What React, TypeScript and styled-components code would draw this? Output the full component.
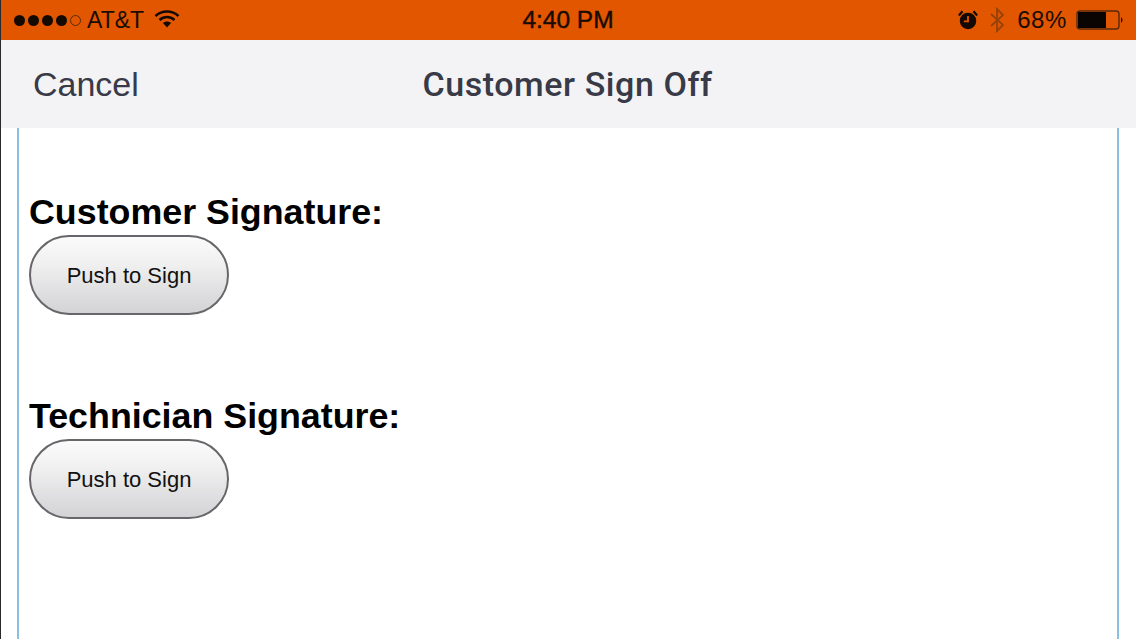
import React from "react";
import styled, { createGlobalStyle } from "styled-components";

const Global = createGlobalStyle`
  html, body { margin: 0; padding: 0; background: #fff; }
  body { font-family: "Liberation Sans", Arial, sans-serif; overflow: hidden; }
`;

const Screen = styled.div`
  width: 1136px;
  height: 639px;
  display: flex;
  flex-direction: column;
  overflow: hidden;
  border-left: 1px solid #2a2a2a;
  box-sizing: border-box;
`;

const StatusBar = styled.header`
  height: 40px;
  flex: none;
  background: #e25600;
  color: #1a0c02;
  display: grid;
  grid-template-columns: 1fr auto 1fr;
  align-items: center;
  font-size: 24px;
  padding: 0 12px 0 13px;
`;

const StatusLeft = styled.div`
  display: flex;
  align-items: center;
`;

const StatusRight = styled.div`
  display: flex;
  align-items: center;
  justify-content: flex-end;
`;

const Dots = styled.div`
  display: flex;
  align-items: center;
  gap: 3px;
  margin-right: 6px;
`;

const Dot = styled.span<{ $empty?: boolean }>`
  width: 11px;
  height: 11px;
  border-radius: 50%;
  box-sizing: border-box;
  background: ${(p) => (p.$empty ? "transparent" : "#140a02")};
  border: ${(p) => (p.$empty ? "1px solid #5a2a08" : "none")};
`;

const Carrier = styled.span`
  font-size: 23px;
  margin-right: 11px;
`;

const Clock = styled.span`
  font-size: 24.5px;
  -webkit-text-stroke: 0.45px #1a0c02;
  margin-left: -2px;
`;

const Percent = styled.span`
  margin: 0 9px 0 12px;
  letter-spacing: 0.6px;
`;

const NavBar = styled.nav`
  height: 88px;
  flex: none;
  background: #f3f3f5;
  display: grid;
  grid-template-columns: 1fr auto 1fr;
  align-items: center;
  padding: 0 32px;
  color: #383a48;
`;

const CancelLink = styled.span`
  font-size: 34px;
`;

const Title = styled.h1`
  margin: 0;
  font-size: 34px;
  font-weight: 500;
  font-family: Roboto, "Liberation Sans", sans-serif;
  letter-spacing: 0.57px;
  transform: translateX(-1px);
`;

const Body = styled.main`
  flex: 1;
  margin: 0 17px 0 16px;
  border-left: 2px solid #8bc0e2;
  border-right: 2px solid #8bc0e2;
  padding: 62px 10px 0;
  display: flex;
  flex-direction: column;
  gap: 79px;
`;

const Section = styled.section`
  display: flex;
  flex-direction: column;
  align-items: flex-start;
`;

const Heading = styled.h2`
  margin: 0;
  font-size: 35.8px;
  line-height: 45px;
  font-weight: 700;
  color: #000;
`;

const SignButton = styled.button`
  width: 200px;
  height: 80px;
  box-sizing: border-box;
  border: 2px solid #68666a;
  border-radius: 40px;
  background: linear-gradient(#fbfbfb 0%, #f1f0f1 35%, #d3d2d4 100%);
  color: #111;
  font-family: "Liberation Sans", Arial, sans-serif;
  font-size: 22px;
  padding: 2px 0 0;
`;

const Alarm = () => (
  <svg width="22" height="24" viewBox="0 0 24 24" fill="none" style={{ marginRight: 10 }}>
    <circle cx="12" cy="13" r="9" fill="#140a02" />
    <path d="M12 7.5V13.5H7.5" stroke="#e25600" strokeWidth="2" />
    <path d="M2 7 L6 2.5M22 7 L18 2.5" stroke="#140a02" strokeWidth="2.4" />
  </svg>
);

const Bluetooth = () => (
  <svg width="16" height="26" viewBox="0 0 16 26" fill="none">
    <path d="M2 7 L14 18 L8 24 V2 L14 8 L2 19" stroke="#94420a" strokeWidth="1.8" />
  </svg>
);

const Wifi = () => (
  <svg width="26" height="20" viewBox="0 0 26 20" fill="none" style={{ marginLeft: -1, marginTop: -3 }}>
    <path d="M1.5 7 C8 1 18 1 24.5 7" stroke="#140a02" strokeWidth="2.6" />
    <path d="M5.5 11 C10 7 16 7 20.5 11" stroke="#140a02" strokeWidth="2.6" />
    <path d="M9 14 L13 18.5 L17 14 C15 12 11 12 9 14Z" fill="#140a02" />
  </svg>
);

const Battery = () => (
  <svg width="48" height="22" viewBox="0 0 48 22" fill="none">
    <rect x="1" y="2" width="42" height="18" rx="3" stroke="#5a2a08" strokeWidth="1.4" />
    <rect x="2" y="3" width="28" height="16" fill="#0a0502" />
    <path d="M45 8.5 C47 9 47 13 45 13.5Z" fill="#140a02" />
  </svg>
);

const SignatureBlock = ({ label }: { label: string }) => (
  <Section>
    <Heading>{label}</Heading>
    <SignButton>Push to Sign</SignButton>
  </Section>
);

export default function App() {
  return (
    <Screen>
      <Global />
      <StatusBar>
        <StatusLeft>
          <Dots>
            <Dot />
            <Dot />
            <Dot />
            <Dot />
            <Dot $empty />
          </Dots>
          <Carrier>AT&amp;T</Carrier>
          <Wifi />
        </StatusLeft>
        <Clock>4:40 PM</Clock>
        <StatusRight>
          <Alarm />
          <Bluetooth />
          <Percent>68%</Percent>
          <Battery />
        </StatusRight>
      </StatusBar>
      <NavBar>
        <CancelLink>Cancel</CancelLink>
        <Title>Customer Sign Off</Title>
        <span />
      </NavBar>
      <Body>
        <SignatureBlock label="Customer Signature:" />
        <SignatureBlock label="Technician Signature:" />
      </Body>
    </Screen>
  );
}
